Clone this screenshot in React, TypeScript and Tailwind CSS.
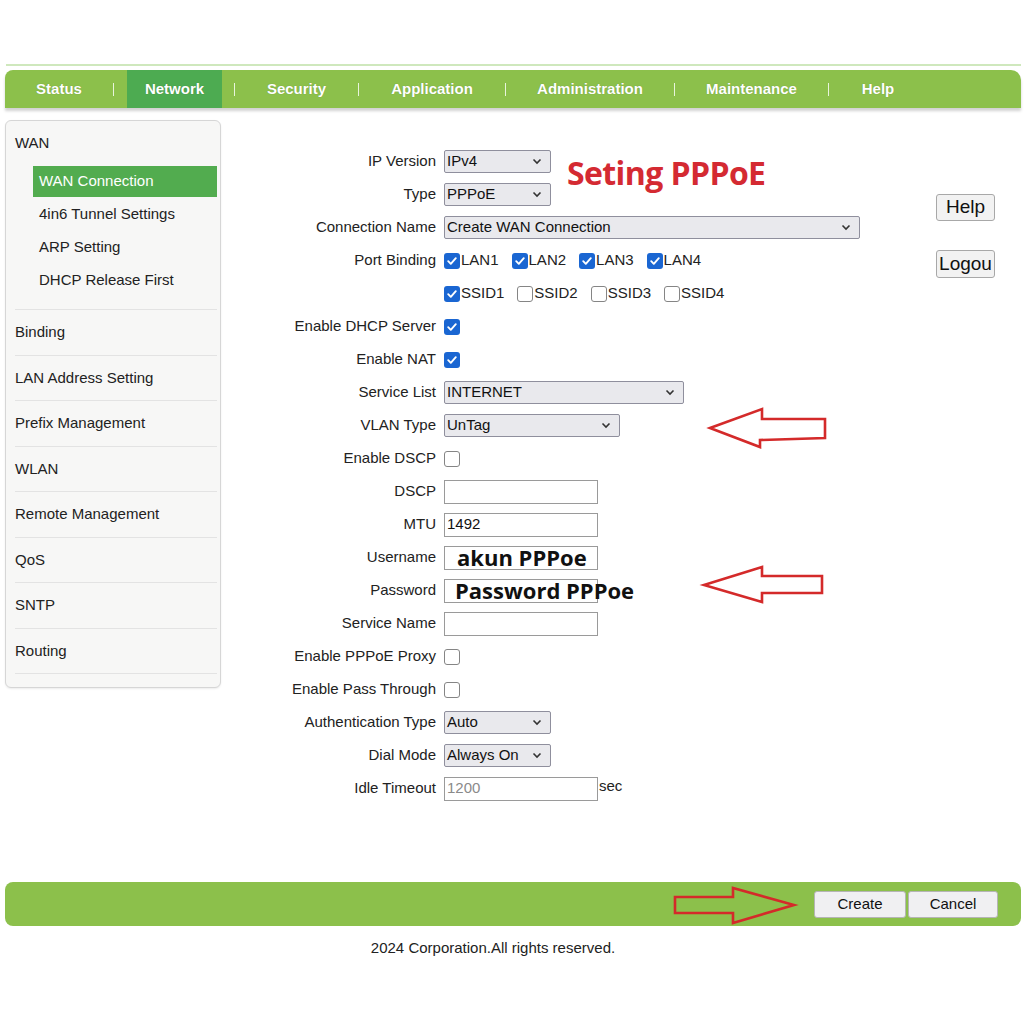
import React from "react";

const Chevron = () => (
  <svg width="10" height="7" viewBox="0 0 10 7" className="shrink-0">
    <path d="M1.5 1.5l3.5 3.5 3.5-3.5" stroke="#333" strokeWidth="1.6" fill="none" />
  </svg>
);

const Select = ({ value, w }: { value: string; w: string }) => (
  <div className={`${w} h-[23px] border border-[#8f8f9d] bg-[#e9e9ed] rounded-[2px] flex items-center justify-between pl-[2px] pr-[8px] text-[15px] text-[#111]`}>
    <span>{value}</span>
    <Chevron />
  </div>
);

const Input = ({ value, gray }: { value?: string; gray?: boolean }) => (
  <div className={`w-[154px] h-[24px] border border-[#9a9a9a] bg-white flex items-center pl-[2px] text-[15px] ${gray ? "text-[#8a8a8a]" : "text-[#111]"}`}>
    {value}
  </div>
);

const Check = ({ checked }: { checked: boolean }) =>
  checked ? (
    <span className="w-[16px] h-[16px] rounded-[3px] bg-[#1a66d2] flex items-center justify-center shrink-0">
      <svg width="12" height="12" viewBox="0 0 12 12">
        <path d="M2.2 6.2l2.6 2.6 5-5.6" stroke="#fff" strokeWidth="1.9" fill="none" strokeLinecap="round" strokeLinejoin="round" />
      </svg>
    </span>
  ) : (
    <span className="w-[16px] h-[16px] rounded-[3px] border border-[#858585] bg-white shrink-0" />
  );

const CheckItem = ({ checked, label }: { checked: boolean; label: string }) => (
  <div className="flex items-center">
    <Check checked={checked} />
    <span className="ml-[1px] text-[15px] text-[#222]">{label}</span>
  </div>
);

const Row = ({ label, children }: { label?: string; children: React.ReactNode }) => (
  <div className="flex items-center h-[33px]">
    <div className="w-[200px] text-right text-[15px] text-[#222] whitespace-nowrap">{label}</div>
    <div className="ml-[8px] flex items-center">{children}</div>
  </div>
);

const navItems: { label: string; w: string; active?: boolean }[] = [
  { label: "Status", w: "w-[108px]" },
  { label: "Network", w: "w-[120px]", active: true },
  { label: "Security", w: "w-[123px]" },
  { label: "Application", w: "w-[146px]" },
  { label: "Administration", w: "w-[168px]" },
  { label: "Maintenance", w: "w-[153px]" },
  { label: "Help", w: "w-[98px]" },
];

const sideItems = [
  "Binding",
  "LAN Address Setting",
  "Prefix Management",
  "WLAN",
  "Remote Management",
  "QoS",
  "SNTP",
  "Routing",
];

export default function App() {
  return (
    <div className="relative w-[1024px] h-[1024px] bg-white font-['Liberation_Sans',Arial,sans-serif] overflow-hidden">
      <div className="pt-[64px]">
        <div className="ml-[6px] mr-[3px] h-[2px] bg-[#cfe8bd]" />
        <div className="mt-[4px] ml-[5px] mr-[3px] h-[38px] bg-[#8cc04b] rounded-tl-[8px] rounded-tr-[10px] flex items-stretch shadow-[0_3px_3px_rgba(0,0,0,0.18)]">
          {navItems.map((it, i) => (
            <React.Fragment key={it.label}>
              {i > 0 && (
                <div className="flex items-center">
                  <div className="w-px h-[13px] bg-[#e8f4dc]" />
                </div>
              )}
              <div className={`${it.w} flex items-stretch`}>
                {it.active ? (
                  <div className="ml-[13px] w-[95px] bg-[#4dab51] flex items-center justify-center text-white font-bold text-[15px] [text-shadow:0_0_1px_rgba(0,0,0,0.25)]">
                    {it.label}
                  </div>
                ) : (
                  <div className="w-full flex items-center justify-center text-white font-bold text-[15px] [text-shadow:0_0_1px_rgba(0,0,0,0.25)]">
                    {it.label}
                  </div>
                )}
              </div>
            </React.Fragment>
          ))}
        </div>

        <div className="mt-[12px] flex items-start">
          {/* Sidebar */}
          <div className="ml-[5px] w-[216px] h-[568px] border border-[#d6d6d6] rounded-[6px] bg-[#f7f7f6] shadow-[0_1px_2px_rgba(0,0,0,0.08)] pl-[9px] pr-[3px] text-[15px] text-[#222]">
            <div className="h-[44px] flex items-center">WAN</div>
            <div className="ml-[18px] h-[31px] bg-[#52ac4f] text-white flex items-center pl-[6px] mt-[1px] mb-[1px]">WAN Connection</div>
            <div className="ml-[24px] h-[33px] flex items-center">4in6 Tunnel Settings</div>
            <div className="ml-[24px] h-[33px] flex items-center">ARP Setting</div>
            <div className="ml-[24px] h-[33px] flex items-center">DHCP Release First</div>
            <div className="h-[13px] border-b border-[#e3e3e3]" />
            {sideItems.map((s) => (
              <div key={s} className="h-[45.5px] flex items-center border-b border-[#e3e3e3]">
                {s}
              </div>
            ))}
          </div>

          {/* Form */}
          <div className="flex-1 pl-[15px] pt-[25px]">
            <Row label="IP Version"><Select value="IPv4" w="w-[107px]" /></Row>
            <Row label="Type"><Select value="PPPoE" w="w-[107px]" /></Row>
            <Row label="Connection Name"><Select value="Create WAN Connection" w="w-[416px]" /></Row>
            <Row label="Port Binding">
              <div className="flex items-center gap-[13px]">
                <CheckItem checked label="LAN1" />
                <CheckItem checked label="LAN2" />
                <CheckItem checked label="LAN3" />
                <CheckItem checked label="LAN4" />
              </div>
            </Row>
            <Row>
              <div className="flex items-center gap-[13px]">
                <CheckItem checked label="SSID1" />
                <CheckItem checked={false} label="SSID2" />
                <CheckItem checked={false} label="SSID3" />
                <CheckItem checked={false} label="SSID4" />
              </div>
            </Row>
            <Row label="Enable DHCP Server"><Check checked /></Row>
            <Row label="Enable NAT"><Check checked /></Row>
            <Row label="Service List"><Select value="INTERNET" w="w-[240px]" /></Row>
            <Row label="VLAN Type"><Select value="UnTag" w="w-[176px]" /></Row>
            <Row label="Enable DSCP"><Check checked={false} /></Row>
            <Row label="DSCP"><Input /></Row>
            <Row label="MTU"><Input value="1492" /></Row>
            <Row label="Username">
              <div className="w-[154px] h-[24px] border border-[#9a9a9a] bg-white flex items-center pl-[12px] text-[22px] font-bold text-[#111] font-['Open_Sans',sans-serif] whitespace-nowrap">
                akun PPPoe
              </div>
            </Row>
            <Row label="Password">
              <div className="w-[154px] h-[24px] border border-[#9a9a9a] bg-white flex items-center pl-[10px] text-[22px] font-bold text-[#111] font-['Open_Sans',sans-serif] whitespace-nowrap overflow-visible">
                Password PPPoe
              </div>
            </Row>
            <Row label="Service Name"><Input /></Row>
            <Row label="Enable PPPoE Proxy"><Check checked={false} /></Row>
            <Row label="Enable Pass Through"><Check checked={false} /></Row>
            <Row label="Authentication Type"><Select value="Auto" w="w-[107px]" /></Row>
            <Row label="Dial Mode"><Select value="Always On" w="w-[107px]" /></Row>
            <Row label="Idle Timeout">
              <Input value="1200" gray />
              <span className="ml-[1px] text-[15px] text-[#222] -mt-[4px]">sec</span>
            </Row>
          </div>

          {/* Right column */}
          <div className="w-[88px] pt-[74px] flex flex-col">
            <div className="w-[59px] h-[27px] border border-[#a8a8a8] rounded-[3px] bg-[#f2f2f2] flex items-center justify-center text-[19px] text-[#111]">Help</div>
            <div className="mt-[29px] w-[59px] h-[28px] border border-[#a8a8a8] rounded-[3px] bg-[#f2f2f2] flex items-center justify-center text-[19px] text-[#111] overflow-hidden whitespace-nowrap">Logou</div>
          </div>
        </div>

        {/* Bottom bar */}
        <div className="mt-[77px] ml-[5px] mr-[3px] h-[44px] bg-[#8cc04b] rounded-[8px] flex items-center justify-end pr-[23px]">
          <div className="w-[92px] h-[27px] border border-[#b5b5b5] rounded-[3px] bg-[#f0f0f2] flex items-center justify-center text-[15px] text-[#111]">Create</div>
          <div className="ml-[2px] w-[90px] h-[27px] border border-[#b5b5b5] rounded-[3px] bg-[#f0f0f2] flex items-center justify-center text-[15px] text-[#111]">Cancel</div>
        </div>
        <div className="mt-[12px] text-center text-[15px] text-[#222] leading-[20px] pr-[38px]">2024 Corporation.All rights reserved.</div>
      </div>

      {/* Annotations */}
      <div className="absolute left-[567px] top-[153px] text-[32px] leading-[40px] font-bold text-[#d42a32] font-['Open_Sans',sans-serif] tracking-[-0.6px] whitespace-nowrap">
        Seting PPPoE
      </div>
      <svg className="absolute left-0 top-0 pointer-events-none" width="1024" height="1024" viewBox="0 0 1024 1024">
        <g stroke="#d42a2a" strokeWidth="2.6" fill="none" strokeLinejoin="miter">
          <polygon points="710,428 762,409 762,419 825,419 825,438 760,440 760,447" />
          <polygon points="704,585 762,567 762,576 822,576 822,593 762,593 762,602" />
          <polygon points="675,897 733,897 733,888 794,905 733,923 733,913 675,913" />
        </g>
      </svg>
    </div>
  );
}
